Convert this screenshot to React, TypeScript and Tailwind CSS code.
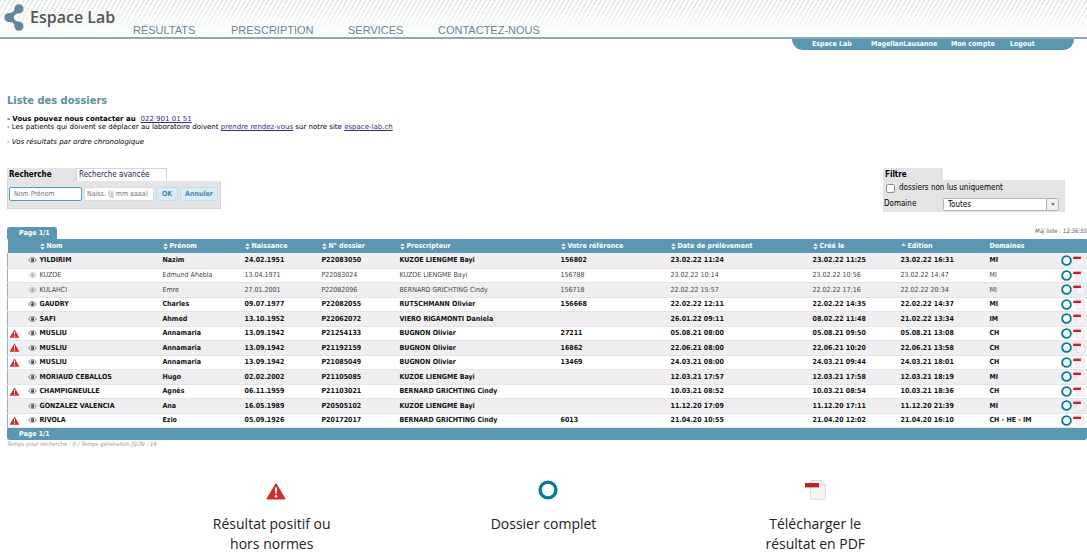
import React from 'react';

const navLinks = [
  { label: 'RÉSULTATS', width: 'w-[98px]' },
  { label: 'PRESCRIPTION', width: 'w-[117px]' },
  { label: 'SERVICES', width: 'w-[90px]' },
  { label: 'CONTACTEZ-NOUS', width: 'w-[110px]' }
];

const userLinks = [
  { label: 'Espace Lab', width: 'w-[59px]' },
  { label: 'MagellanLausanne', width: 'w-[80px]' },
  { label: 'Mon compte', width: 'w-[59px]' },
  { label: 'Logout', width: 'w-[40px]' }
];

const columns = [
  { title: '', width: 'w-[20px]', sort: '' },
  { title: 'Nom', width: 'w-[135px]', sort: 'both' },
  { title: 'Prénom', width: 'w-[82px]', sort: 'both' },
  { title: 'Naissance', width: 'w-[77px]', sort: 'both' },
  { title: 'N° dossier', width: 'w-[78px]', sort: 'both' },
  { title: 'Prescripteur', width: 'w-[161px]', sort: 'both' },
  { title: 'Votre référence', width: 'w-[110px]', sort: 'both' },
  { title: 'Date de prélèvement', width: 'w-[142px]', sort: 'both' },
  { title: 'Créé le', width: 'w-[88px]', sort: 'both' },
  { title: 'Edition', width: 'w-[89px]', sort: 'up' },
  { title: 'Domaines', width: 'w-[71px]', sort: '' },
  { title: '', width: 'w-[27px]', sort: '' }
];

const dossiers = [
  { alert: false, read: false, cells: ['YILDIRIM', 'Nazim', '24.02.1951', 'P22083050', 'KUZOE LIENGME Bayi', '156802', '23.02.22 11:24', '23.02.22 11:25', '23.02.22 16:31', 'MI'] },
  { alert: false, read: true, cells: ['KUZOE', 'Edmund Ahebla', '13.04.1971', 'P22083024', 'KUZOE LIENGME Bayi', '156788', '23.02.22 10:14', '23.02.22 10:56', '23.02.22 14:47', 'MI'] },
  { alert: false, read: true, cells: ['KULAHCI', 'Emre', '27.01.2001', 'P22082096', 'BERNARD GRICHTING Cindy', '156718', '22.02.22 15:57', '22.02.22 17:16', '22.02.22 20:34', 'MI'] },
  { alert: false, read: false, cells: ['GAUDRY', 'Charles', '09.07.1977', 'P22082055', 'RUTSCHMANN Olivier', '156668', '22.02.22 12:11', '22.02.22 14:35', '22.02.22 14:37', 'MI'] },
  { alert: false, read: false, cells: ['SAFI', 'Ahmed', '13.10.1952', 'P22062072', 'VIERO RIGAMONTI Daniela', '', '26.01.22 09:11', '08.02.22 11:48', '21.02.22 13:34', 'IM'] },
  { alert: true, read: false, cells: ['MUSLIU', 'Annamaria', '13.09.1942', 'P21254133', 'BUGNON Olivier', '27211', '05.08.21 08:00', '05.08.21 09:50', '05.08.21 13:08', 'CH'] },
  { alert: true, read: false, cells: ['MUSLIU', 'Annamaria', '13.09.1942', 'P21192159', 'BUGNON Olivier', '16862', '22.06.21 08:00', '22.06.21 10:20', '22.06.21 13:58', 'CH'] },
  { alert: true, read: false, cells: ['MUSLIU', 'Annamaria', '13.09.1942', 'P21085049', 'BUGNON Olivier', '13469', '24.03.21 08:00', '24.03.21 09:44', '24.03.21 18:01', 'CH'] },
  { alert: false, read: false, cells: ['MORIAUD CEBALLOS', 'Hugo', '02.02.2002', 'P21105085', 'KUZOE LIENGME Bayi', '', '12.03.21 17:57', '12.03.21 17:58', '12.03.21 18:19', 'MI'] },
  { alert: true, read: false, cells: ['CHAMPIGNEULLE', 'Agnès', '06.11.1959', 'P21103021', 'BERNARD GRICHTING Cindy', '', '10.03.21 08:52', '10.03.21 08:54', '10.03.21 18:36', 'CH'] },
  { alert: false, read: false, cells: ['GONZALEZ VALENCIA', 'Ana', '16.05.1989', 'P20505102', 'KUZOE LIENGME Bayi', '', '11.12.20 17:09', '11.12.20 17:11', '11.12.20 21:39', 'MI'] },
  { alert: true, read: false, cells: ['RIVOLA', 'Ezio', '05.09.1926', 'P20172017', 'BERNARD GRICHTING Cindy', '6013', '21.04.20 10:55', '21.04.20 12:02', '21.04.20 16:10', 'CH - HE - IM'] }
];

const Logo = () => (
  <svg viewBox="0 0 20 27" className="h-[27px] w-5 shrink-0" fill="#64869a">
    <circle cx="15" cy="4.8" r="4.5" />
    <circle cx="5" cy="13.5" r="4.5" />
    <circle cx="15" cy="22.2" r="4.5" />
    <path d="M10.5 4.8C10.8 7.6 8 9 5 9V18C8 18 10.8 19.4 10.5 22.2L15 17.8C11 17 9.8 15.3 9.8 13.5C9.8 11.7 11 10 15 9.2Z" />
  </svg>
);

const AlertIcon = ({ className }: { className: string }) => (
  <svg viewBox="0 0 20 18" className={className}>
    <path d="M10 0.8L19.4 16.4Q19.6 17.5 18.4 17.5H1.6Q0.4 17.5 0.6 16.4Z" fill="#cf2e2c" />
    <path d="M8.8 5.5H11.2L10.6 12H9.4Z" fill="#fff" />
    <circle cx="10" cy="14.3" r="1.3" fill="#fff" />
  </svg>
);

const RingIcon = ({ className }: { className: string }) => (
  <svg viewBox="0 0 20 20" className={className}>
    <circle cx="10" cy="10" r="7.9" fill="#fff" stroke="#077a96" strokeWidth="3.4" />
  </svg>
);

const PdfIcon = ({ className }: { className: string }) => (
  <svg viewBox="0 0 21 20" className={className}>
    <path d="M7 0.6H16L20.3 4.6V17.6Q20.3 19.3 18.6 19.3H7.4Q5.6 19.3 5.6 17.6V2Q5.6 0.6 7 0.6Z" fill="#f5f5f5" stroke="#d8d8d8" />
    <path d="M16 0.6V4.6H20.3" fill="#fff" stroke="#d8d8d8" />
    <rect x="0" y="3" width="14" height="4.4" fill="#c3202f" />
  </svg>
);

const EyeIcon = ({ faded }: { faded: boolean }) => (
  <svg viewBox="0 0 18 12" className={faded ? 'h-[6px] w-[9px] shrink-0 opacity-45' : 'h-[6px] w-[9px] shrink-0'}>
    <path d="M1 6Q9 -3.5 17 6Q9 15.5 1 6Z" fill="#fff" stroke="#5c5c5c" strokeWidth="1.6" />
    <circle cx="9" cy="6" r="3.4" fill="#3f3f3f" />
    <circle cx="8" cy="4.8" r="1" fill="#fff" />
  </svg>
);

const SortIcon = ({ sort }: { sort: string }) => (
  <svg viewBox="0 0 10 14" className="h-[7px] w-[5px]" fill="#fff">
    <path d="M5 0.5L9.5 5.5H0.5Z" />
    {sort === 'both' && <path d="M5 13.5L9.5 8.5H0.5Z" />}
  </svg>
);

const Header = () => (
  <header>
    <div className="relative flex h-[39px] items-start border-b-2 border-[#8fa9b0] bg-[#fcfdfd]">
      <div className="absolute inset-0 bg-[repeating-linear-gradient(120deg,#e2e2e2_0px,#e2e2e2_1px,#fcfdfd_2px,#fcfdfd_4px)] [mask-image:linear-gradient(to_bottom,black,transparent_90%)]" />
      <div className="relative flex w-[133px] items-center gap-[6px] pt-1 pl-1">
        <Logo />
        <span className="whitespace-nowrap font-['Open_Sans',sans-serif] text-[16px] leading-[27px] font-semibold text-[#4f5558]">Espace Lab</span>
      </div>
      <nav className="relative flex pt-6 font-['Liberation_Sans',sans-serif] text-[11px] leading-[13px] text-[#6c8590]">
        {navLinks.map((link) => (
          <a key={link.label} href="#" className={link.width}>
            {link.label}
          </a>
        ))}
      </nav>
    </div>
    <div className="mr-[13px] flex justify-end">
      <nav className="flex h-[11px] w-[282px] rounded-b-xl bg-[#5b96b3] pl-5 text-[7px] leading-[10px] font-bold whitespace-nowrap text-white">
        {userLinks.map((link) => (
          <a key={link.label} href="#" className={link.width}>
            {link.label}
          </a>
        ))}
      </nav>
    </div>
  </header>
);

const Search = () => (
  <form className="w-[214px] text-[8px]">
    <div className="flex h-[13px] leading-[13px]">
      <button type="button" className="w-[69px] bg-[#e4e4e6] pl-[2px] text-left font-bold">
        Recherche
      </button>
      <button type="button" className="w-[91px] border border-b-0 border-[#d5d5d8] bg-white pl-[2px] text-left leading-[12px] text-[#1f1f4a]">
        Recherche avancée
      </button>
    </div>
    <div className="flex h-7 items-start gap-[2px] border border-t-0 border-[#d5d5d8] bg-[#e4e4e6] pt-[6px] pl-[1px] text-[7px]">
      <input aria-label="Nom Prénom" placeholder="Nom Prénom" className="h-[14px] w-[73px] rounded-[2px] border border-[#4d9cc9] bg-white pl-1 placeholder:text-[#707070]" />
      <input aria-label="Date de naissance" placeholder="Naiss. (jj mm aaaa)" className="h-[14px] w-[70px] rounded-[2px] border border-[#dcdcde] bg-white pl-[2px] placeholder:text-[#707070]" />
      <button type="submit" className="h-[14px] w-[22px] rounded-[3px] border border-[#c2dcea] bg-[#d9edf8] leading-[12px] font-bold text-[#4987a8]">
        OK
      </button>
      <button type="reset" className="h-[14px] w-[38px] rounded-[3px] border border-[#c2dcea] bg-[#d9edf8] leading-[12px] font-bold text-[#4987a8]">
        Annuler
      </button>
    </div>
  </form>
);

const Filter = () => (
  <form className="w-[182px] text-[8px]">
    <h2 className="h-3 w-[60px] bg-[#e4e4e6] pl-[2px] leading-[13px] font-bold">Filtre</h2>
    <div className="h-8 bg-[#e4e4e6]">
      <label className="flex h-4 items-center gap-1 pl-[3px]">
        <input type="checkbox" className="h-[9px] w-[9px] appearance-none rounded-[2px] border border-[#8d8d8d] bg-white" />
        dossiers non lus uniquement
      </label>
      <div className="flex h-4 items-center">
        <label htmlFor="domaine" className="w-[60px] pl-px">
          Domaine
        </label>
        <div className="relative">
          <select id="domaine" className="block h-[13px] w-[116px] appearance-none rounded-[2px] border border-[#b5b5b5] bg-white pl-1 leading-[11px]">
            <option>Toutes</option>
          </select>
          <span className="pointer-events-none absolute inset-y-px right-px flex w-3 items-center justify-center border-l border-[#b5b5b5] bg-[#efefef]">
            <svg viewBox="0 0 6 4" className="h-[3px] w-1" fill="#666">
              <path d="M0 0H6L3 4Z" />
            </svg>
          </span>
        </div>
      </div>
    </div>
  </form>
);

const Dossiers = () => (
  <section className="mt-[15px] pl-[7px]">
    <div className="flex h-3 items-start justify-between">
      <span className="h-3 w-[50px] rounded-t-[3px] bg-[#5b96b3] pl-3 text-[7px] leading-[12px] font-bold text-white">Page 1/1</span>
      <span className="text-[6px] leading-[8px] text-[#555] italic">Màj liste : 12:36:55</span>
    </div>
    <table className="w-full table-fixed border-collapse text-left text-[7px] whitespace-nowrap">
      <thead>
        <tr className="h-[14px] bg-[#5b96b3] text-white">
          {columns.map((col, ind) => (
            <th key={col.title + ind} className={`${col.width} p-0 leading-[14px] font-bold`}>
              <span className={ind === 1 ? 'flex items-center gap-[2px] pl-3' : 'flex items-center gap-[2px]'}>
                {col.sort && <SortIcon sort={col.sort} />}
                {col.title}
              </span>
            </th>
          ))}
        </tr>
      </thead>
      <tbody className="border-x border-[#8db4c6]">
        {dossiers.map((row) => (
          <tr
            key={row.cells[3]}
            className={`border-b border-[#e4e4e6] odd:h-[15px] odd:bg-[#f0eef0] even:h-[14px] ${row.read ? 'text-[#444]' : 'font-bold text-[#111]'}`}
          >
            <td className="p-0 leading-[12px]">{row.alert && <AlertIcon className="ml-px h-[9px] w-[11px]" />}</td>
            {row.cells.map((cell, ind) => (
              <td key={ind} className="p-0 leading-[12px]">
                {ind === 0 ? (
                  <span className="flex items-center gap-[3px]">
                    <EyeIcon faded={row.read} />
                    {cell}
                  </span>
                ) : (
                  cell
                )}
              </td>
            ))}
            <td className="p-0">
              <div className="flex items-center gap-px">
                <RingIcon className="h-[11px] w-[11px] shrink-0" />
                <PdfIcon className="h-[11px] w-3 shrink-0" />
              </div>
            </td>
          </tr>
        ))}
      </tbody>
    </table>
    <div className="h-3 rounded-b-[3px] bg-[#5b96b3] pl-3 text-[7px] leading-[12px] font-bold text-white">Page 1/1</div>
    <p className="text-[6px] leading-[7px] text-[#999] italic">Temps pour recherche : 0 / Temps génération JSON : 16</p>
  </section>
);

const Legend = () => (
  <section className="mt-[33px] grid grid-cols-3 px-[12.5%] text-center font-['Open_Sans',sans-serif] text-[14px] leading-5 text-[#222]">
    <div className="flex flex-col items-center">
      <div className="flex h-[34px] items-start pt-[2px] pl-2">
        <AlertIcon className="h-[18px] w-5" />
      </div>
      <p className="w-[130px]">Résultat positif ou hors normes</p>
    </div>
    <div className="flex flex-col items-center">
      <div className="flex h-[34px] items-start pl-2">
        <RingIcon className="h-5 w-5" />
      </div>
      <p>Dossier complet</p>
    </div>
    <div className="flex flex-col items-center">
      <div className="flex h-[34px] items-start">
        <PdfIcon className="h-5 w-[21px]" />
      </div>
      <p className="w-[115px]">Télécharger le résultat en PDF</p>
    </div>
  </section>
);

const App = () => {
  return (
    <div className="overflow-x-hidden bg-white font-['DejaVu_Sans_Condensed','DejaVu_Sans',sans-serif] text-black">
      <Header />
      <main>
        <div className="mt-[43px] pl-[7px] font-['DejaVu_Sans',sans-serif] text-[7px] leading-[8px]">
          <h1 className="font-['DejaVu_Sans_Condensed','DejaVu_Sans',sans-serif] text-[11px] leading-[15px] font-bold text-[#5f8d9c]">Liste des dossiers</h1>
          <p className="mt-[7px] font-bold">
            - Vous pouvez nous contacter au&nbsp;{' '}
            <a href="#" className="font-normal text-[#2c2c8c] underline">022 901 01 51</a>
          </p>
          <p>
            - Les patients qui doivent se déplacer au laboratoire doivent{' '}
            <a href="#" className="text-[#2c2c8c] underline">prendre rendez-vous</a> sur notre site{' '}
            <a href="#" className="text-[#2c2c8c] underline">espace-lab.ch</a>
          </p>
          <p className="mt-[7px] italic">- Vos résultats par ordre chronologique</p>
        </div>
        <div className="mt-[22px] flex items-start justify-between pr-[22px] pl-[7px]">
          <Search />
          <Filter />
        </div>
        <Dossiers />
      </main>
      <Legend />
    </div>
  );
};

export default App;
